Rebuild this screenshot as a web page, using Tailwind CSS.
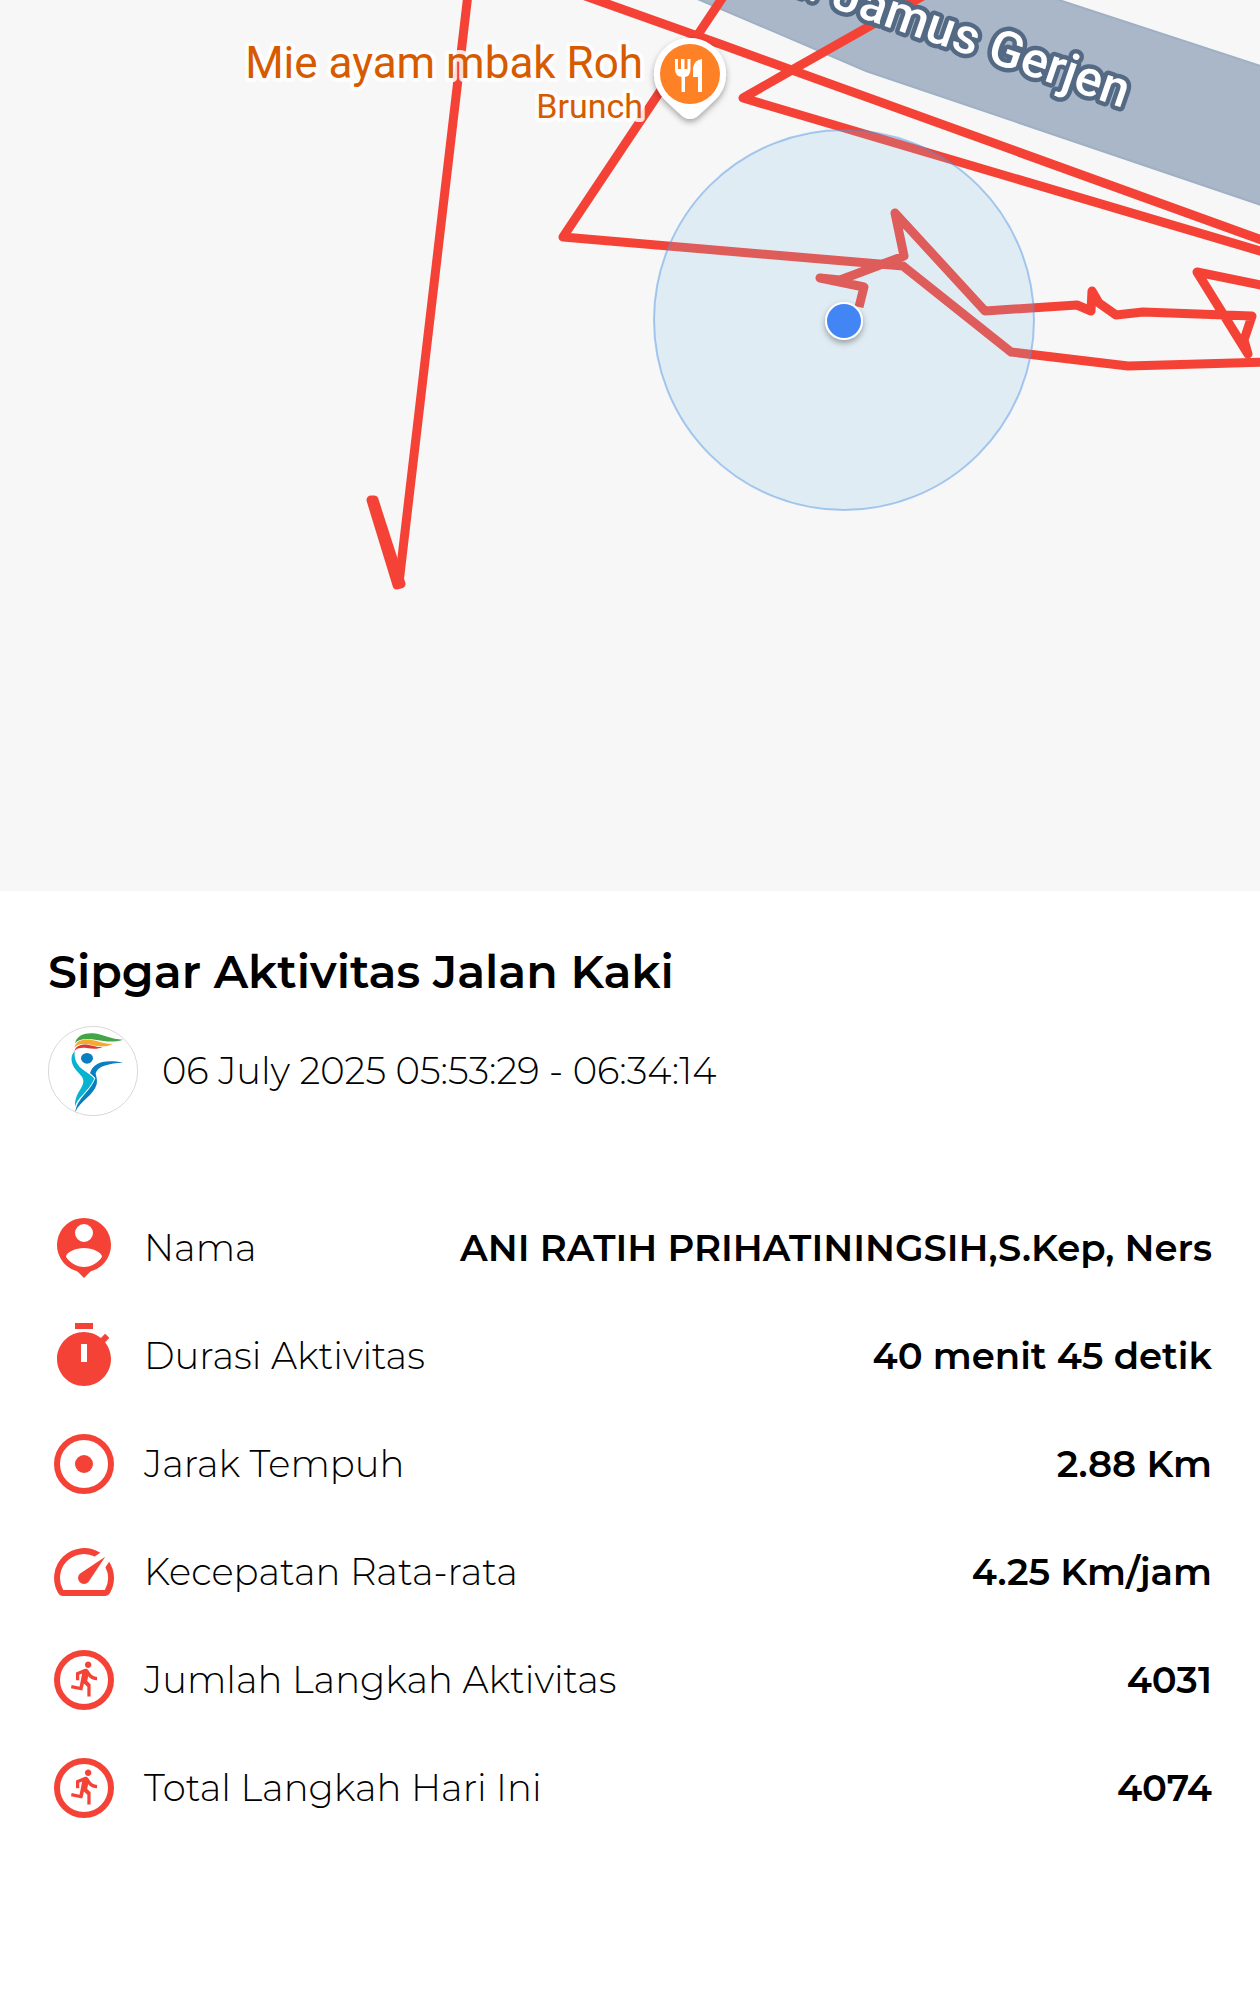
<!DOCTYPE html>
<html lang="id">

<head>
  <meta charset="UTF-8">
  <meta name="viewport" content="width=device-width, initial-scale=1.0">
  <title>Sipgar Aktivitas Jalan Kaki</title>
  <script src="https://cdn.jsdelivr.net/npm/@tailwindcss/browser@4"></script>
</head>

<body class="bg-white text-black font-['Montserrat','Inter',sans-serif]">

  <!-- Peta rute -->
  <svg class="block w-full bg-[#f7f7f7] font-['Roboto',sans-serif]" viewBox="0 0 1260 891" role="img" aria-label="Peta rute">
    <defs>
      <filter id="bayangan" x="-50%" y="-50%" width="200%" height="200%">
        <feDropShadow dx="0" dy="3" stdDeviation="3" flood-color="#000" flood-opacity="0.35" />
      </filter>
    </defs>

    <path d="M660 -16L700 0L866 71L1270 208V69L1059 0L1010 -16Z" fill="#a9b7c8" stroke="#9fb0c5" stroke-width="2" />

    <g fill="none" stroke="#f44336" stroke-width="9" stroke-linejoin="round">
      <path d="M468 -6L399 583L372 501" />
      <path d="M371 500L397 585L401 584L374 500Z" />
      <path d="M574 -8L720 44L1270 243" />
      <path d="M725 -6L563 237L903 266L1011 352L1128 366L1270 362" />
      <path d="M930 -8L792 70L743 98L1270 254" />
      <path d="M859 307L864 287L820 278L840 280L904 256L895 213L985 311L1077 305L1091 311L1092 291L1099 303L1116 315L1143 312L1252 316L1244 340L1248 354L1197 272L1270 287" />
    </g>

    <circle cx="844" cy="320" r="190" fill="#89c5ed" fill-opacity="0.2" stroke="#4a90e2" stroke-opacity="0.45" stroke-width="2" />
    <circle cx="844" cy="321" r="19" fill="#fff" filter="url(#bayangan)" />
    <circle cx="844" cy="321" r="17" fill="#4285f4" />

    <text transform="translate(1123 108) rotate(19)" text-anchor="end" font-size="50" font-weight="500" fill="#fff" stroke="#546a84" stroke-width="9" stroke-linejoin="round" paint-order="stroke">Jl. Jamus Gerjen</text>

    <g text-anchor="end" fill="#d65b00" stroke="#fff" stroke-opacity="0.85" stroke-width="8" stroke-linejoin="round" paint-order="stroke">
      <text x="643" y="78" font-size="44">Mie ayam mbak Roh</text>
      <text x="643" y="118" font-size="34">Brunch</text>
    </g>

    <path d="M690 38a36 36 0 0 1 26 61L699 115Q690 123 681 115L664 99A36 36 0 0 1 690 38Z" fill="#fff" filter="url(#bayangan)" />
    <circle cx="690" cy="74" r="30" fill="#ff8126" />
    <path d="M675 59h3v10h3v-10h3.500v10h3v-10h3v10q0 7-5.500 8v15h-3.500v-15q-6.500-1-6.500-8zM702 59v33h-4v-15h-5v-9q1-8 9-9z" fill="#fff" />
  </svg>

  <main class="px-12 pt-12">
    <h1 class="text-[46px] leading-[66px] font-semibold">Sipgar Aktivitas Jalan Kaki</h1>

    <div class="mt-[21px] flex items-center gap-6">
      <svg class="size-[90px] shrink-0" viewBox="24 32 270 270" aria-hidden="true">
        <circle cx="159" cy="167" r="134" fill="#fff" stroke="#c4c4c4" stroke-width="2" />
        <path d="M105 84C110 60 135 52 160 54C192 57 212 73 249 73C218 83 195 78 170 74C140 69 117 70 105 84Z" fill="#43a548" />
        <path d="M103 97C107 77 128 71 150 73C178 76 192 87 218 85C198 98 172 93 152 88C130 84 112 86 103 97Z" fill="#f3ab2e" />
        <path d="M103 108C107 92 122 86 143 88C160 91 172 96 188 95C172 103 155 100 140 98C122 96 109 99 103 108Z" fill="#dc3636" />
        <path d="M104 107C90 122 93 143 104 159C116 176 132 184 130 201C127 223 103 235 105 275C111 246 147 228 163 190C153 176 128 166 114 148C104 134 103 121 104 107Z" fill="#08b3cf" />
        <path d="M106 290C108 252 151 229 165 188L150 174C158 144 190 130 249 142C208 144 174 151 167 174C168 183 173 192 170 207C162 239 120 258 106 290Z" fill="#0a7fc0" />
        <path d="M106 283C108 248 151 229 165 188C153 174 130 166 117 151" fill="none" stroke="#fff" stroke-width="2" />
        <ellipse cx="141" cy="129" rx="18" ry="16" fill="#0a7fc0" />
      </svg>
      <p class="text-[37px] leading-12 font-light">06 July 2025 05:53:29 - 06:34:14</p>
    </div>

    <dl class="mt-24 mb-12 flex flex-col gap-9 text-[37px] leading-12">
      <div class="flex items-center gap-6">
        <svg class="size-18 shrink-0 fill-[#f44336]" viewBox="0 0 24 24" aria-hidden="true">
          <path fill-rule="evenodd" d="M12 2A9 9 0 0 1 15 19.480Q14.200 19.700 13.900 20.050L12 22L10.100 20.050Q9.800 19.700 9 19.480A9 9 0 0 1 12 2ZM12 4a3 3 0 1 0 0 6a3 3 0 0 0 0-6ZM12 12C9.300 12 6 13.400 6 14.900C7.200 16.900 9.500 18.300 12 18.300S16.800 16.900 18 14.900C18 13.400 14.700 12 12 12Z" />
        </svg>
        <dt class="font-light">Nama</dt>
        <dd class="ml-auto text-right font-semibold">ANI RATIH PRIHATININGSIH,S.Kep, Ners</dd>
      </div>

      <div class="flex items-center gap-6">
        <svg class="size-18 shrink-0 fill-[#f44336]" viewBox="0 0 24 24" aria-hidden="true">
          <path d="M15 1H9v2h6V1zm-4 13h2V8h-2v6zm8.030-6.610l1.420-1.420c-.43-.51-.9-.99-1.410-1.410l-1.420 1.420C16.070 4.740 14.120 4 12 4c-4.970 0-9 4.030-9 9s4.020 9 9 9 9-4.030 9-9c0-2.120-.74-4.070-1.970-5.610z" fill-rule="evenodd" />
        </svg>
        <dt class="font-light">Durasi Aktivitas</dt>
        <dd class="ml-auto text-right font-semibold">40 menit 45 detik</dd>
      </div>

      <div class="flex items-center gap-6">
        <svg class="size-18 shrink-0" viewBox="0 0 24 24" aria-hidden="true">
          <circle cx="12" cy="12" r="9" fill="none" stroke="#f44336" stroke-width="2" />
          <circle cx="12" cy="12" r="3" fill="#f44336" />
        </svg>
        <dt class="font-light">Jarak Tempuh</dt>
        <dd class="ml-auto text-right font-semibold">2.88 Km</dd>
      </div>

      <div class="flex items-center gap-6">
        <svg class="size-18 shrink-0 fill-[#f44336]" viewBox="0 0 24 24" aria-hidden="true">
          <path d="M20.380 8.570l-1.230 1.850a8 8 0 0 1-.22 7.580H5.070A8 8 0 0 1 15.580 6.850l1.850-1.230A10 10 0 0 0 3.350 19a2 2 0 0 0 1.720 1h13.850a2 2 0 0 0 1.740-1 10 10 0 0 0-.27-10.440zm-9.790 6.840a2 2 0 0 0 2.830 0l5.660-8.490-8.490 5.660a2 2 0 0 0 0 2.830z" />
        </svg>
        <dt class="font-light">Kecepatan Rata-rata</dt>
        <dd class="ml-auto text-right font-semibold">4.25 Km/jam</dd>
      </div>

      <div class="flex items-center gap-6">
        <svg class="size-18 shrink-0" viewBox="0 0 24 24" aria-hidden="true">
          <circle cx="12" cy="12" r="9" fill="none" stroke="#f44336" stroke-width="2" />
          <path id="pelari" transform="translate(6.1 5.050) scale(.54)" fill="#f44336" d="M13.490 5.480c1.100 0 2-.9 2-2s-.9-2-2-2-2 .9-2 2 .9 2 2 2zm-3.600 13.900l1-4.400 2.100 2v6h2v-7.500l-2.100-2 .6-3c1.300 1.500 3.300 2.500 5.500 2.500v-2c-1.900 0-3.500-1-4.300-2.400l-1-1.600c-.4-.6-1-1-1.700-1-.3 0-.5.1-.8.1l-5.200 2.200v4.700h2v-3.400l1.800-.7-1.600 8.100-4.900-1-.4 2 7 1.400z" />
        </svg>
        <dt class="font-light">Jumlah Langkah Aktivitas</dt>
        <dd class="ml-auto text-right font-semibold">4031</dd>
      </div>

      <div class="flex items-center gap-6">
        <svg class="size-18 shrink-0" viewBox="0 0 24 24" aria-hidden="true">
          <circle cx="12" cy="12" r="9" fill="none" stroke="#f44336" stroke-width="2" />
          <use href="#pelari" />
        </svg>
        <dt class="font-light">Total Langkah Hari Ini</dt>
        <dd class="ml-auto text-right font-semibold">4074</dd>
      </div>
    </dl>
  </main>

</body>

</html>
